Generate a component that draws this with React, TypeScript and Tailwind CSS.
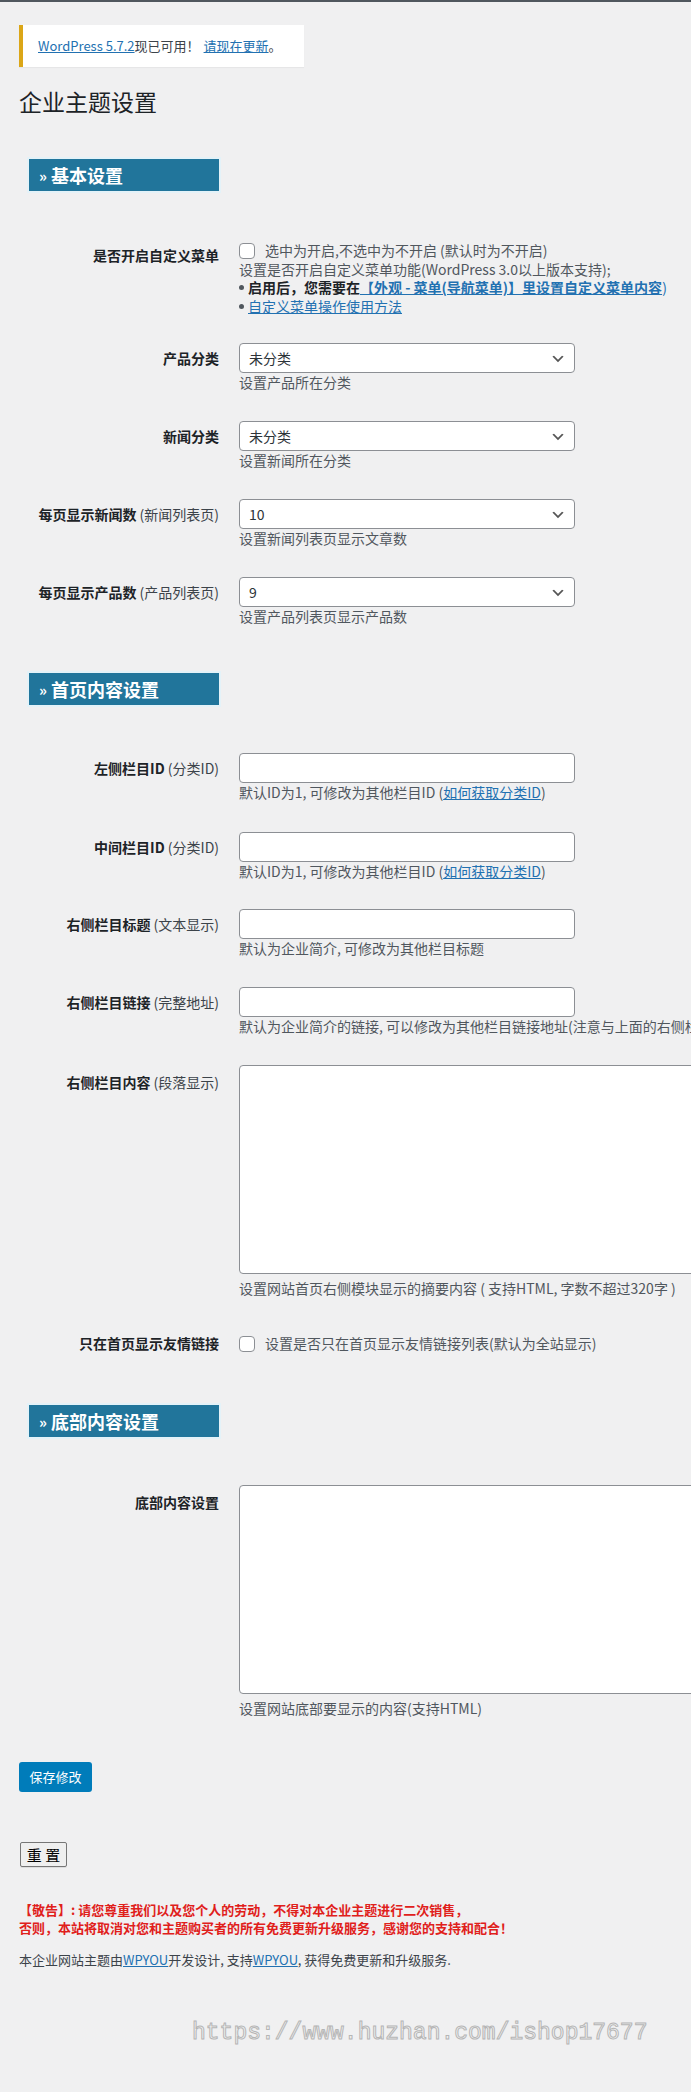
import React from "react";

const FONT = "font-['Noto_Sans_CJK_SC','Noto_Sans',sans-serif]";

function SectionHeader({ title, className }: { title: string; className: string }) {
  return (
    <div className={`${className} ml-[29px] w-[190px] h-[32px] bg-[#21759b] shadow-[0_0_0_2px_#e4f2f8] flex items-center pl-[10px]`}>
      <span className="text-white text-[18px] font-bold leading-[32px]">
        <span className="text-[15px] mr-[4px] align-[1px]">»</span>
        {title}
      </span>
    </div>
  );
}

function Label({ main, sub, pt }: { main: string; sub?: string; pt: string }) {
  return (
    <div className={`w-[200px] shrink-0 text-right ${pt} leading-[18px] text-[14px] text-[#1d2327] whitespace-nowrap`}>
      <span className="font-bold">{main}</span>
      {sub ? <span className="text-[#3c434a]"> {sub}</span> : null}
    </div>
  );
}

function Chevron() {
  return (
    <svg width="16" height="16" viewBox="0 0 20 20" className="absolute right-[8px] top-[7px]">
      <path d="M5 6l5 5 5-5 2 1-7 7-7-7 2-1z" fill="#555" />
    </svg>
  );
}

function SelectBox({ value }: { value: string }) {
  return (
    <div className="relative w-[336px] h-[30px] bg-white border border-[#8c8f94] rounded-[4px] pl-[9px] text-[14px] leading-[28px] text-[#2c3338]">
      {value}
      <Chevron />
    </div>
  );
}

function InputBox() {
  return <div className="w-[336px] h-[30px] bg-white border border-[#8c8f94] rounded-[4px]" />;
}

function Desc({ children, className = "" }: { children: React.ReactNode; className?: string }) {
  return <div className={`text-[14px] leading-[18px] text-[#50575e] whitespace-nowrap ${className}`}>{children}</div>;
}

function Checkbox() {
  return <span className="inline-block w-[16px] h-[16px] bg-white border border-[#8c8f94] rounded-[4px] align-[-3px] mr-[10px]" />;
}

function Bullet() {
  return <span className="inline-block w-[5px] h-[5px] rounded-full bg-[#50575e] align-[3px] mr-[4px]" />;
}

function SelectRow({ main, sub, value, desc, mt }: { main: string; sub?: string; value: string; desc: string; mt: string }) {
  return (
    <div className={`flex ${mt} pl-[19px]`}>
      <Label main={main} sub={sub} pt="pt-[6px]" />
      <div className="ml-[20px]">
        <SelectBox value={value} />
        <Desc>{desc}</Desc>
      </div>
    </div>
  );
}

function InputRow({ main, sub, desc, mt }: { main: string; sub?: string; desc: React.ReactNode; mt: string }) {
  return (
    <div className={`flex ${mt} pl-[19px]`}>
      <Label main={main} sub={sub} pt="pt-[6px]" />
      <div className="ml-[20px]">
        <InputBox />
        <Desc>{desc}</Desc>
      </div>
    </div>
  );
}

function TextareaRow({ main, sub, desc, mt }: { main: string; sub?: string; desc: string; mt: string }) {
  return (
    <div className={`flex ${mt} pl-[19px]`}>
      <Label main={main} sub={sub} pt="pt-[8px]" />
      <div className="ml-[20px]">
        <div className="w-[520px] h-[209px] bg-white border border-[#8c8f94] rounded-[4px]" />
        <Desc className="mt-[5px]">{desc}</Desc>
      </div>
    </div>
  );
}

const link = "text-[#2271b1] underline";

export default function App() {
  return (
    <div className={`${FONT} w-full min-h-[2092px] bg-[#f0f0f1] overflow-hidden`}>
      <div className="h-[2px] bg-[#50575e]" />

      {/* notice */}
      <div className="mt-[23px] ml-[19px] w-[285px] h-[42px] bg-white border-l-4 border-[#dba617] shadow-[0_1px_1px_rgba(0,0,0,0.04)] flex items-center pl-[15px] text-[13px] text-[#3c434a] whitespace-nowrap">
        <span className={link}>WordPress 5.7.2</span>
        <span>现已可用！</span>
        <span className={`${link} ml-[4px]`}>请现在更新</span>
        <span>。</span>
      </div>

      <h1 className="mt-[19px] ml-[19px] text-[23px] leading-[30px] text-[#1d2327] font-normal">企业主题设置</h1>

      <SectionHeader title="基本设置" className="mt-[43px]" />

      {/* custom menu row */}
      <div className="flex mt-[50px] pl-[19px]">
        <Label main="是否开启自定义菜单" pt="pt-[5px]" />
        <div className="ml-[20px] text-[14px] leading-[18.5px] text-[#50575e] whitespace-nowrap">
          <div>
            <Checkbox />
            选中为开启,不选中为不开启 (默认时为不开启)
          </div>
          <div>设置是否开启自定义菜单功能(WordPress 3.0以上版本支持);</div>
          <div>
            <Bullet />
            <span className="font-bold text-[#1d2327]">启用后，您需要在</span>
            <span className={`${link} font-bold`}>【外观 - 菜单(导航菜单)】里设置自定义菜单内容</span>
            <span className="text-[#2271b1]">)</span>
          </div>
          <div>
            <Bullet />
            <span className={link}>自定义菜单操作使用方法</span>
          </div>
        </div>
      </div>

      <SelectRow mt="mt-[28px]" main="产品分类" value="未分类" desc="设置产品所在分类" />
      <SelectRow mt="mt-[30px]" main="新闻分类" value="未分类" desc="设置新闻所在分类" />
      <SelectRow mt="mt-[30px]" main="每页显示新闻数" sub="(新闻列表页)" value="10" desc="设置新闻列表页显示文章数" />
      <SelectRow mt="mt-[30px]" main="每页显示产品数" sub="(产品列表页)" value="9" desc="设置产品列表页显示产品数" />

      <SectionHeader title="首页内容设置" className="mt-[48px]" />

      <InputRow
        mt="mt-[48px]"
        main="左侧栏目ID"
        sub="(分类ID)"
        desc={
          <>
            默认ID为1, 可修改为其他栏目ID (<span className={link}>如何获取分类ID</span>)
          </>
        }
      />
      <InputRow
        mt="mt-[31px]"
        main="中间栏目ID"
        sub="(分类ID)"
        desc={
          <>
            默认ID为1, 可修改为其他栏目ID (<span className={link}>如何获取分类ID</span>)
          </>
        }
      />
      <InputRow mt="mt-[29px]" main="右侧栏目标题" sub="(文本显示)" desc="默认为企业简介, 可修改为其他栏目标题" />
      <InputRow
        mt="mt-[30px]"
        main="右侧栏目链接"
        sub="(完整地址)"
        desc="默认为企业简介的链接, 可以修改为其他栏目链接地址(注意与上面的右侧栏目标题对应)"
      />
      <TextareaRow
        mt="mt-[30px]"
        main="右侧栏目内容"
        sub="(段落显示)"
        desc="设置网站首页右侧模块显示的摘要内容 ( 支持HTML, 字数不超过320字 )"
      />

      <div className="flex mt-[37px] pl-[19px]">
        <Label main="只在首页显示友情链接" pt="pt-0" />
        <div className="ml-[20px] text-[14px] leading-[18px] text-[#50575e] whitespace-nowrap">
          <Checkbox />
          设置是否只在首页显示友情链接列表(默认为全站显示)
        </div>
      </div>

      <SectionHeader title="底部内容设置" className="mt-[53px]" />

      <TextareaRow mt="mt-[48px]" main="底部内容设置" desc="设置网站底部要显示的内容(支持HTML)" />

      <div className="mt-[45px] ml-[19px] w-[73px] h-[30px] rounded-[3px] bg-[#007cba] text-white text-[13px] leading-[30px] text-center">
        保存修改
      </div>

      <div className="mt-[50px] ml-[20px] w-[47px] h-[25px] bg-[#efefef] border border-[#767676] rounded-[2px] text-[15px] leading-[23px] text-center text-black shadow-[0_1px_0_rgba(0,0,0,0.08)]">
        重 置
      </div>

      <div className="mt-[34px] ml-[19px] text-[13px] leading-[18px] font-bold text-[#e0201b] whitespace-nowrap">
        <div>【敬告】: 请您尊重我们以及您个人的劳动，不得对本企业主题进行二次销售，</div>
        <div>否则，本站将取消对您和主题购买者的所有免费更新升级服务，感谢您的支持和配合！</div>
      </div>

      <div className="mt-[14px] ml-[19px] text-[13px] leading-[18px] text-[#3c434a] whitespace-nowrap">
        本企业网站主题由<span className={link}>WPYOU</span>开发设计, 支持<span className={link}>WPYOU</span>, 获得免费更新和升级服务.
      </div>

      <div className="mt-[49px] ml-[192px] font-['Liberation_Mono',monospace] text-[23px] leading-[30px] text-[#f3f3f3] [-webkit-text-stroke:1px_#b5b5b5] whitespace-nowrap">
        https://www.huzhan.com/ishop17677
      </div>
    </div>
  );
}
